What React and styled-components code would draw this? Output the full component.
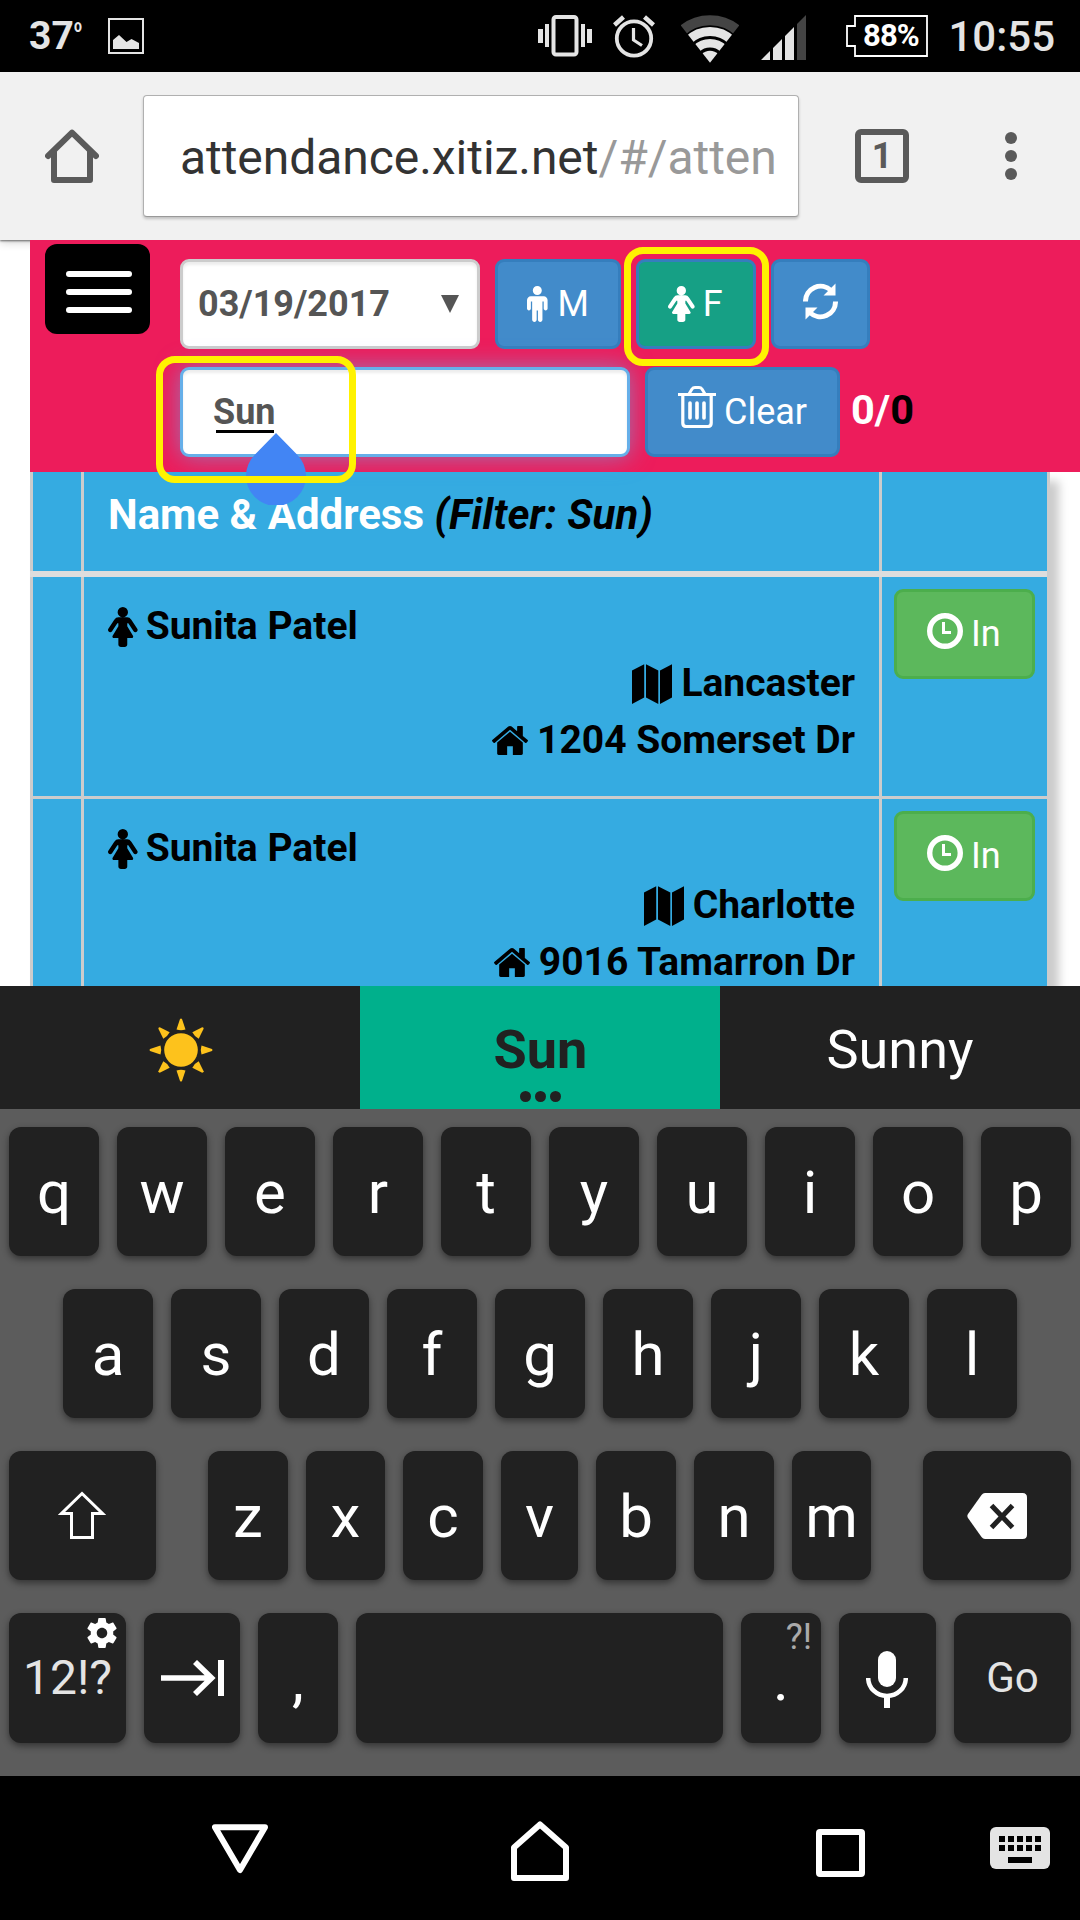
import React from "react";
import styled, { createGlobalStyle } from "styled-components";

const GlobalStyle = createGlobalStyle`
  *, *::before, *::after { box-sizing: border-box; }
  body { margin: 0; background: #000; font-family: Roboto, "Noto Sans", sans-serif; }
  svg { display: block; flex: none; }
`;

const Screen = styled.div`
  width: 1080px;
  height: 1920px;
  display: flex;
  flex-direction: column;
  overflow: hidden;
`;

/* ---------- status bar ---------- */
const StatusBar = styled.header`
  height: 72px;
  display: flex;
  align-items: center;
  padding: 0 25px 0 29px;
  background: #000;
  color: #e4e4e4;
`;
const Temperature = styled.div`
  width: 79px;
  display: flex;
  font-size: 39px;
  font-weight: 700;
  line-height: 46px;
`;
const Degree = styled.span`
  font-size: 18px;
  font-weight: 700;
  line-height: 20px;
  padding-top: 3px;
  transform: scaleX(0.78);
  transform-origin: left;
`;
const StatusIcons = styled.div`
  margin-left: auto;
  display: flex;
  align-items: flex-start;
  height: 42px;
`;
const StatusItem = styled.div`
  margin-left: ${(p) => p.$gap}px;
`;
const Battery = styled.div`
  display: grid;
  margin-left: 40px;
  > * { grid-area: 1 / 1; }
`;
const BatteryText = styled.span`
  padding-left: 17px;
  font-size: 31px;
  font-weight: 700;
  line-height: 42px;
  color: #fff;
  letter-spacing: -0.9px;
`;
const Clock = styled.span`
  width: 107px;
  margin-left: 20px;
  font-size: 42px;
  font-weight: 500;
  line-height: 44px;
  text-align: right;
`;

/* ---------- browser bar ---------- */
const BrowserBar = styled.div`
  height: 168px;
  display: flex;
  align-items: center;
  padding-left: 45px;
  background: #f1f1f1;
  position: relative;
  z-index: 1;
  box-shadow: 0 1px 2px rgba(0, 0, 0, 0.55), 0 2px 9px rgba(0, 0, 0, 0.2);
`;
const UrlBox = styled.div`
  width: 656px;
  height: 122px;
  margin: 0 56px 0 44px;
  padding: 0 0 0 36px;
  background: #fff;
  border: 1px solid #b0b0b0;
  border-bottom-color: #999;
  border-radius: 4px;
  box-shadow: 0 2px 3px rgba(0, 0, 0, 0.2);
  display: flex;
  align-items: center;
`;
const Url = styled.div`
  white-space: nowrap;
  font-size: 48px;
  line-height: 64px;
  letter-spacing: -0.05px;
  color: #333;
  padding-top: 4px;
`;
const UrlPath = styled.span`
  color: #999;
`;
const TabCount = styled.div`
  width: 54px;
  height: 54px;
  border: 6px solid #5a5a5a;
  border-radius: 6px;
  color: #5a5a5a;
  display: flex;
  align-items: center;
  justify-content: center;
  font-size: 36px;
  font-weight: 700;
`;
const Dots = styled.div`
  margin-left: 96px;
  display: flex;
  flex-direction: column;
  gap: 6px;
`;
const Dot = styled.i`
  width: 12px;
  height: 12px;
  border-radius: 50%;
  background: #5a5a5a;
`;

/* ---------- web page ---------- */
const Page = styled.main`
  height: 746px;
  padding-left: 30px;
  background: #fff;
  position: relative;
  overflow: hidden;
`;
const PageHeader = styled.div`
  height: 232px;
  padding: 4px 0 0 15px;
  display: flex;
  background: #ed1c5b;
  position: relative;
  z-index: 1;
`;
const MenuButton = styled.button`
  width: 105px;
  height: 90px;
  padding: 6px 0 0 2px;
  border: 0;
  border-radius: 12px;
  background: #000;
  display: flex;
  flex-direction: column;
  align-items: center;
  justify-content: center;
  gap: 12px;
`;
const MenuLine = styled.i`
  width: 66px;
  height: 6px;
  border-radius: 3px;
  background: #fff;
`;
const Controls = styled.div`
  margin: 15px 0 0 30px;
  display: flex;
  flex-direction: column;
  gap: 18px;
`;
const ControlRow = styled.div`
  display: flex;
  gap: 15px;
`;
const Field = styled.div`
  width: ${(p) => p.$w}px;
  height: 90px;
  border: 3px solid ${(p) => (p.$focus ? "#66afe9" : "#ccc")};
  border-radius: 9px;
  background: #fff;
  color: #555;
  font-size: 36px;
  font-weight: 700;
  display: flex;
  align-items: center;
  box-shadow: inset 0 3px 3px rgba(0, 0, 0, 0.075)${(p) => (p.$focus ? ", 0 0 24px rgba(102, 175, 233, 0.6)" : "")};
`;
const DateField = styled(Field)`
  justify-content: space-between;
  padding: 0 18px 0 15px;
`;
const SearchField = styled(Field)`
  padding-left: 30px;
`;
const Composing = styled.span`
  height: 41px;
  margin-top: 1px;
  line-height: 40px;
  &::after {
    content: "";
    display: block;
    height: 3px;
    margin: -2px 2px 0 3px;
    background: #000;
  }
`;
const Button = styled.button`
  width: ${(p) => p.$w}px;
  height: 90px;
  padding: 0 0 0 ${(p) => p.$pad}px;
  border: 3px solid ${(p) => (p.$green ? "#4cae4c" : "#357ebd")};
  border-radius: 9px;
  background: ${(p) => (p.$green ? "#5cb85c" : p.$active ? "#16a085" : "#428bca")};
  color: #fff;
  font: 400 36px Roboto, sans-serif;
  display: flex;
  align-items: center;
  gap: ${(p) => p.$gap || 8}px;
`;
const Raised = styled.span`
  padding-bottom: ${(p) => p.$by}px;
`;
const Count = styled.div`
  margin-left: -4px;
  font-size: 41.5px;
  font-weight: 700;
  line-height: 85px;
  color: #fff;
`;
const Total = styled.span`
  color: #000;
`;
const Highlight = styled.div`
  position: absolute;
  left: ${(p) => p.$x}px;
  top: ${(p) => p.$y}px;
  width: ${(p) => p.$w}px;
  height: ${(p) => p.$h}px;
  border: 7px solid #fff200;
  border-radius: 19px;
  z-index: 3;
`;
const CursorHandle = styled.div`
  position: absolute;
  left: 246px;
  top: 193px;
  z-index: 2;
`;

/* ---------- table ---------- */
const Table = styled.div`
  width: 1020px;
  height: 560px;
  border-right: 3px solid #ccc;
  background: #35abe1;
  box-shadow: 9px 9px 9px #ccc;
`;
const Row = styled.div`
  height: ${(p) => (p.$head ? 105 : 222)}px;
  border-bottom: ${(p) => (p.$head ? "6px solid #ddd" : "3px solid #ccc")};
  display: grid;
  grid-template-columns: 51px 798px 168px;
`;
const Cell = styled.div`
  border-left: 3px solid #ccc;
  padding: ${(p) => p.$pad || "0"};
  font-size: ${(p) => (p.$head ? 42 : 39)}px;
  font-weight: 700;
  line-height: 57px;
`;
const HeadText = styled.span`
  color: #fff;
`;
const FilterText = styled.i`
  letter-spacing: 0.2px;
`;
const Line = styled.div`
  height: 57px;
  display: flex;
  align-items: center;
  justify-content: ${(p) => (p.$right ? "flex-end" : "flex-start")};
  gap: ${(p) => (p.$right ? 9 : 8)}px;
`;

/* ---------- keyboard ---------- */
const Suggestions = styled.div`
  height: 123px;
  display: grid;
  grid-template-columns: repeat(3, 1fr);
`;
const Suggestion = styled.div`
  background: ${(p) => (p.$active ? "#00b08c" : "#212121")};
  color: ${(p) => (p.$active ? "#212121" : "#fff")};
  font-size: 54px;
  font-weight: ${(p) => (p.$active ? 700 : 400)};
  line-height: 66px;
  display: flex;
  flex-direction: column;
  align-items: center;
  padding-top: ${(p) => p.$top || 31}px;
  padding-left: ${(p) => p.$left || 0}px;
`;
const MoreDots = styled.div`
  display: flex;
  gap: 4px;
  margin-top: 8px;
`;
const MoreDot = styled.i`
  width: 11px;
  height: 11px;
  border-radius: 50%;
  background: #212121;
`;
const Keyboard = styled.div`
  height: 667px;
  padding-top: 18px;
  background: #5c5c5c;
  display: flex;
  flex-direction: column;
  gap: 33px;
`;
const KeyRow = styled.div`
  display: flex;
  justify-content: ${(p) => (p.$spread ? "space-between" : "center")};
  gap: 18px;
  padding: 0 9px;
`;
const KeyGroup = styled.div`
  display: flex;
  gap: 18px;
`;
const Key = styled.div`
  width: ${(p) => p.$w}px;
  height: ${(p) => p.$h || 129}px;
  padding-top: ${(p) => (p.$pad === undefined ? 4 : p.$pad)}px;
  padding-right: ${(p) => p.$right || 0}px;
  border-radius: 12px;
  background: #212121;
  color: ${(p) => p.$color || "#fff"};
  font-size: ${(p) => p.$size || 60}px;
  line-height: 1.172;
  box-shadow: 0 3px 7px rgba(0, 0, 0, 0.45);
  display: flex;
  align-items: center;
  justify-content: center;
  position: relative;
`;
const KeyHint = styled.span`
  position: absolute;
  top: ${(p) => p.$top}px;
  right: ${(p) => p.$right}px;
  color: #aaa;
  font-size: 36px;
`;

/* ---------- navigation bar ---------- */
const NavBar = styled.nav`
  height: 144px;
  background: #000;
  display: flex;
  align-items: flex-start;
  padding: 44px 0 0 212px;
`;
const NavItem = styled.div`
  margin: ${(p) => p.$top}px 0 0 ${(p) => p.$left}px;
`;

/* ---------- icons ---------- */
const PictureIcon = () => (
  <svg width="36" height="36" viewBox="0 0 36 36">
    <rect x="1" y="1" width="34" height="34" fill="none" stroke="#e4e4e4" strokeWidth="2" />
    <path d="M5 31V22l6-5 7.500 7 5-3 7.500 4v6z" fill="#e4e4e4" />
  </svg>
);
const VibrateIcon = () => (
  <svg width="54" height="42" viewBox="0 0 54 42">
    <path d="M0 14h5v14H0zM7 9h4v23H7zM43 9h4v23h-4zM49 14h5v14h-5z" fill="#e4e4e4" />
    <rect x="15.500" y="2" width="23" height="37.500" rx="2.500" fill="none" stroke="#e4e4e4" strokeWidth="4" />
  </svg>
);
const AlarmIcon = () => (
  <svg width="42" height="43" viewBox="0 0 42 43" fill="none" stroke="#e4e4e4">
    <circle cx="21" cy="23.500" r="17.200" strokeWidth="3.800" />
    <path d="M1.500 10 10.500 2M40.500 10 31.500 2" strokeWidth="4.500" />
    <path d="M20.500 13v12l8.500 5.500" strokeWidth="3.200" />
  </svg>
);
const WifiIcon = () => (
  <svg width="58" height="48" viewBox="0 0 58 48" fill="none">
    <clipPath id="fan"><path d="M29 47.700-1 9.500V-4h60V9.500z" /></clipPath>
    <g clipPath="url(#fan)" stroke="#e4e4e4">
      <circle cx="29" cy="47.700" r="42.500" stroke="#444" strokeWidth="10" />
      <circle cx="29" cy="47.700" r="31.200" strokeWidth="8.800" />
      <circle cx="29" cy="47.700" r="19.500" strokeWidth="8.600" />
      <circle cx="29" cy="47.700" r="12" fill="#e4e4e4" stroke="none" />
    </g>
  </svg>
);
const SignalIcon = () => (
  <svg width="45" height="45" viewBox="0 0 45 45">
    <path d="M0 45 9 36v9zM12 33l9-9v21h-9zM24 21l9-9v33h-9z" fill="#e4e4e4" />
    <path d="M36 9l9-9v45h-9z" fill="#444" />
  </svg>
);
const BatteryIcon = () => (
  <svg width="82" height="42" viewBox="0 0 82 42">
    <path d="M9 1h72v40H9V31H1V11h8z" fill="none" stroke="#fff" strokeWidth="1.800" />
  </svg>
);
const BrowserHomeIcon = () => (
  <svg width="54" height="54" viewBox="0 0 54 54" fill="none" stroke="#5a5a5a" strokeWidth="6" strokeLinejoin="round" strokeLinecap="round">
    <path d="M3 27 27 3.600 51 27" />
    <path d="M9 23v28h36V23" />
  </svg>
);
const MaleIcon = () => (
  <svg width="20.600" height="36" viewBox="384 0 1024 1792" fill="currentColor">
    <path d="M1408 704v416q0 40-28 68t-68 28-68-28-28-68v-352h-64v912q0 46-33 79t-79 33-79-33-33-79v-464h-64v464q0 46-33 79t-79 33-79-33-33-79v-912h-64v352q0 40-28 68t-68 28-68-28-28-68v-416q0-80 56-136t136-56h640q80 0 136 56t56 136zm-288-480q0 93-65.500 158.500t-158.500 65.500-158.500-65.500-65.500-158.500 65.500-158.500 158.500-65.500 158.500 65.500 65.500 158.500z" />
  </svg>
);
const FemaleIcon = ({ h }) => (
  <svg width={(h * 1280) / 1728} height={h} viewBox="256 0 1280 1728" fill="currentColor">
    <path d="M1536 992q0 40-28 68t-68 28q-51 0-80-43l-227-341h-45v132l247 411q9 15 9 33 0 26-19 45t-45 19h-192v272q0 46-33 79t-79 33h-160q-46 0-79-33t-33-79v-272h-192q-26 0-45-19t-19-45q0-18 9-33l247-411v-132h-45l-227 341q-29 43-80 43-40 0-68-28t-28-68q0-29 16-53l256-384q73-107 176-107h384q103 0 176 107l256 384q16 24 16 53zm-416-768q0 93-65.500 158.500t-158.500 65.500-158.500-65.500-65.500-158.500 65.500-158.500 158.500-65.500 158.500 65.500 65.500 158.500z" />
  </svg>
);
const HomeIcon = () => (
  <svg width="36" height="29" viewBox="88 253 1616 1284" preserveAspectRatio="none" fill="currentColor">
    <path d="M1472 992v480q0 26-19 45t-45 19h-384v-384h-256v384h-384q-26 0-45-19t-19-45v-480q0-1 .5-3t.5-3l575-474 575 474q1 2 1 6zm223-69l-62 74q-8 9-21 11h-3q-13 0-21-7l-692-577-692 577q-12 8-24 7-13-2-21-11l-62-74q-8-10-7-23.500t11-21.500l719-599q32-26 76-26t76 26l244 204v-195q0-14 9-23t23-9h192q14 0 23 9t9 23v408l219 182q10 8 11 21.500t-7 23.500z" />
  </svg>
);
const MapIcon = () => (
  <svg width="40" height="40" viewBox="0 0 40 40" fill="currentColor">
    <path d="M0 6.500 12.200.200V33.500L0 40zM14 .2 26.300 6.500V40L14 33.500zM28 6.500 40 .2V33.500L28 40z" />
  </svg>
);
const RefreshIcon = () => (
  <svg width="35" height="37" viewBox="0 0 35 37">
    <g fill="none" stroke="#fff" strokeWidth="5">
      <path d="M2.500 18.500A15 15 0 0 1 28 7.500" />
      <path d="M32.500 18.500A15 15 0 0 1 7 29.500" />
    </g>
    <path d="M32.500.500V12.500H20.500zM2.500 36.500V24.500H14.500z" fill="#fff" />
  </svg>
);
const TrashIcon = () => (
  <svg width="38" height="42" viewBox="0 0 38 42" fill="none" stroke="#fff">
    <path d="M0 8.500h38" strokeWidth="3" />
    <path d="M11 8 14 3Q15 1.500 17 1.500h4Q23 1.500 24 3l3 5" strokeWidth="3" />
    <path d="M4.800 9v28q0 3.500 3.500 3.500h21.400q3.500 0 3.500-3.500V9" strokeWidth="3.200" />
    <path d="M12 17v15M19 17v15M26 17v15" strokeWidth="3.600" strokeLinecap="round" />
  </svg>
);
const ClockIcon = () => (
  <svg width="36" height="36" viewBox="0 0 36 36" fill="none" stroke="#fff">
    <circle cx="18" cy="18" r="15.300" strokeWidth="5.400" />
    <path d="M16.500 9v10.500H24" strokeWidth="3" />
  </svg>
);
const HandleIcon = () => (
  <svg width="60" height="72" viewBox="0 0 60 72">
    <path d="M30 0 51 21.500A30 30 0 1 1 9 21.500z" fill="#4285f4" />
  </svg>
);
const SunIcon = () => (
  <svg width="64" height="64" viewBox="-32 -32 64 64" fill="#fdc21c">
    <circle r="16.800" />
    {[0, 45, 90, 135, 180, 225, 270, 315].map((a) => (
      <path key={a} transform={`rotate(${a})`} d="M-4.500-20.500Q0-19 4.500-20.500L1-31Q0-32-1-31z" />
    ))}
  </svg>
);
const ShiftIcon = () => (
  <svg width="48" height="49" viewBox="0 0 48 49">
    <path d="M24 2.500 44.500 22.500H34.500V46.500H13.500V22.500H3.500z" fill="none" stroke="#fff" strokeWidth="3" />
  </svg>
);
const BackspaceIcon = () => (
  <svg width="60" height="46" viewBox="0 0 60 46">
    <path d="M18 0H55.500Q60 0 60 4.500v37Q60 46 55.500 46H18Q16 46 14.500 44L1 25Q-.3 23 1 21L14.500 2Q16 0 18 0z" fill="#fff" />
    <path d="M24.500 12.500 45.500 34.500M45.500 12.500 24.500 34.500" stroke="#212121" strokeWidth="5" />
  </svg>
);
const GearIcon = () => (
  <svg width="30" height="30" viewBox="2 2 20 20" fill="#fff">
    <path d="M19.430 12.980c.04-.32.070-.64.070-.98s-.03-.66-.07-.98l2.110-1.650c.19-.15.240-.42.120-.64l-2-3.460c-.12-.22-.39-.3-.61-.22l-2.490 1c-.52-.4-1.080-.73-1.690-.98l-.38-2.650C14.460 2.180 14.250 2 14 2h-4c-.25 0-.46.180-.49.420l-.38 2.650c-.61.250-1.170.590-1.690.98l-2.490-1c-.23-.09-.49 0-.61.220l-2 3.460c-.13.220-.07.490.120.640l2.110 1.650c-.04.320-.07.650-.07.980s.03.660.070.980l-2.110 1.650c-.19.150-.24.420-.12.640l2 3.460c.12.220.390.300.610.220l2.490-1c.52.400 1.080.730 1.690.980l.38 2.650c.03.240.240.420.490.420h4c.25 0 .46-.18.490-.42l.38-2.650c.61-.25 1.170-.59 1.690-.98l2.490 1c.23.090.490 0 .61-.22l2-3.460c.12-.22.070-.49-.12-.64l-2.110-1.650zM12 15.500c-1.930 0-3.500-1.570-3.500-3.500s1.570-3.500 3.500-3.500 3.500 1.570 3.500 3.500-1.570 3.500-3.500 3.500z" />
  </svg>
);
const TabIcon = () => (
  <svg width="63" height="36" viewBox="0 0 63 36" fill="none" stroke="#fff">
    <path d="M0 18h50M34 2 50.500 18 34 34" strokeWidth="5.700" />
    <path d="M60 0v36" strokeWidth="6" />
  </svg>
);
const MicIcon = () => (
  <svg width="42" height="57" viewBox="0 0 42 57">
    <rect x="12" y="0" width="18" height="36" rx="9" fill="#fff" />
    <path d="M2.200 27a18.800 18 0 0 0 37.600 0" fill="none" stroke="#fff" strokeWidth="4.500" />
    <path d="M21 45v12" stroke="#fff" strokeWidth="6" />
  </svg>
);
const BackIcon = () => (
  <svg width="57" height="52" viewBox="0 0 57 52">
    <path d="M3 5.200h50L28 48z" fill="none" stroke="#fff" strokeWidth="6" strokeLinejoin="round" />
  </svg>
);
const NavHomeIcon = () => (
  <svg width="58" height="62" viewBox="0 0 58 62">
    <path d="M3 27.500 29 4.500 55 27.500V58H3z" fill="none" stroke="#fff" strokeWidth="6" strokeLinejoin="round" />
  </svg>
);
const RecentsIcon = () => (
  <svg width="49" height="48" viewBox="0 0 49 48">
    <rect x="3" y="3" width="43" height="42" rx="1" fill="none" stroke="#fff" strokeWidth="6" />
  </svg>
);
const KeyboardIcon = () => (
  <svg width="60" height="42" viewBox="0 0 60 42">
    <rect width="60" height="42" rx="6" fill="#e4e4e4" />
    {[9, 18].map((y) => [9, 18, 27, 36, 45].map((x) => <rect key={`${x}-${y}`} x={x} y={y} width="6" height="6" />))}
    <rect x="18" y="30" width="24" height="6" />
  </svg>
);

const people = [
  { name: "Sunita Patel", city: "Lancaster", street: "1204 Somerset Dr" },
  { name: "Sunita Patel", city: "Charlotte", street: "9016 Tamarron Dr" },
];
const thirdRow = [["z", 80], ["x", 79], ["c", 80], ["v", 77], ["b", 80], ["n", 80], ["m", 79]];

export default function App() {
  return (
    <Screen>
      <GlobalStyle />
      <StatusBar>
        <Temperature>37<Degree>o</Degree></Temperature>
        <PictureIcon />
        <StatusIcons>
          <VibrateIcon />
          <StatusItem $gap={21}><AlarmIcon /></StatusItem>
          <StatusItem $gap={26}><WifiIcon /></StatusItem>
          <StatusItem $gap={22}><SignalIcon /></StatusItem>
          <Battery><BatteryIcon /><BatteryText>88%</BatteryText></Battery>
          <Clock>10:55</Clock>
        </StatusIcons>
      </StatusBar>

      <BrowserBar>
        <BrowserHomeIcon />
        <UrlBox>
          <Url>attendance.xitiz.net<UrlPath>/#/atten</UrlPath></Url>
        </UrlBox>
        <TabCount>1</TabCount>
        <Dots><Dot /><Dot /><Dot /></Dots>
      </BrowserBar>

      <Page>
        <PageHeader>
          <MenuButton><MenuLine /><MenuLine /><MenuLine /></MenuButton>
          <Controls>
            <ControlRow>
              <DateField $w={300}>
                03/19/2017
                <svg width="18" height="18" viewBox="0 0 18 18"><path d="M0 0h18L9 18z" fill="#555" /></svg>
              </DateField>
              <Button $w={126} $pad={29} $gap={10}><MaleIcon />M</Button>
              <Button $w={120} $pad={29} $active><FemaleIcon h={36} />F</Button>
              <Button $w={99} $pad={29}><Raised $by={5}><RefreshIcon /></Raised></Button>
            </ControlRow>
            <ControlRow>
              <SearchField $w={450} $focus><Composing>Sun</Composing></SearchField>
              <Button $w={195} $pad={30}><Raised $by={10}><TrashIcon /></Raised>Clear</Button>
              <Count>0/<Total>0</Total></Count>
            </ControlRow>
          </Controls>
        </PageHeader>
        <Table>
          <Row $head>
            <Cell />
            <Cell $head $pad="14px 24px"><HeadText>Name &amp; Address</HeadText> <FilterText>(Filter: Sun)</FilterText></Cell>
            <Cell />
          </Row>
          {people.map((p) => (
            <Row key={p.street}>
              <Cell />
              <Cell $pad="21px 24px">
                <Line><FemaleIcon h={40} />{p.name}</Line>
                <Line $right><MapIcon />{p.city}</Line>
                <Line $right><HomeIcon />{p.street}</Line>
              </Cell>
              <Cell $pad="12px">
                <Button $w={141} $pad={30} $green><Raised $by={6}><ClockIcon /></Raised>In</Button>
              </Cell>
            </Row>
          ))}
        </Table>
        <CursorHandle><HandleIcon /></CursorHandle>
        <Highlight $x={156} $y={116} $w={200} $h={127} />
        <Highlight $x={624} $y={7} $w={145} $h={119} />
      </Page>

      <Suggestions>
        <Suggestion $top={32} $left={1}><SunIcon /></Suggestion>
        <Suggestion $active $left={1}>Sun<MoreDots><MoreDot /><MoreDot /><MoreDot /></MoreDots></Suggestion>
        <Suggestion>Sunny</Suggestion>
      </Suggestions>

      <Keyboard>
        <KeyRow>{"qwertyuiop".split("").map((k) => <Key key={k} $w={90}>{k}</Key>)}</KeyRow>
        <KeyRow>{"asdfghjkl".split("").map((k) => <Key key={k} $w={90}>{k}</Key>)}</KeyRow>
        <KeyRow $spread>
          <Key $w={147} $pad={0} $right={2}><ShiftIcon /></Key>
          <KeyGroup>{thirdRow.map(([k, w]) => <Key key={k} $w={w}>{k}</Key>)}</KeyGroup>
          <Key $w={148} $pad={0}><BackspaceIcon /></Key>
        </KeyRow>
        <KeyRow $spread>
          <Key $w={117} $h={130} $pad={0} $size={48} $color="#e4e4e4">
            12!?
            <KeyHint $top={5} $right={9}><GearIcon /></KeyHint>
          </Key>
          <Key $w={96} $h={130} $pad={0}><TabIcon /></Key>
          <Key $w={80} $h={130}>,</Key>
          <Key $w={367} $h={130} />
          <Key $w={80} $h={130}>.<KeyHint $top={3} $right={9}>?!</KeyHint></Key>
          <Key $w={97} $h={130} $pad={2} $right={2}><MicIcon /></Key>
          <Key $w={117} $h={130} $pad={0} $size={42} $color="#e4e4e4">Go</Key>
        </KeyRow>
      </Keyboard>

      <NavBar>
        <NavItem $top={2} $left={0}><BackIcon /></NavItem>
        <NavItem $top={0} $left={242}><NavHomeIcon /></NavItem>
        <NavItem $top={9} $left={247}><RecentsIcon /></NavItem>
        <NavItem $top={7} $left={125}><KeyboardIcon /></NavItem>
      </NavBar>
    </Screen>
  );
}
